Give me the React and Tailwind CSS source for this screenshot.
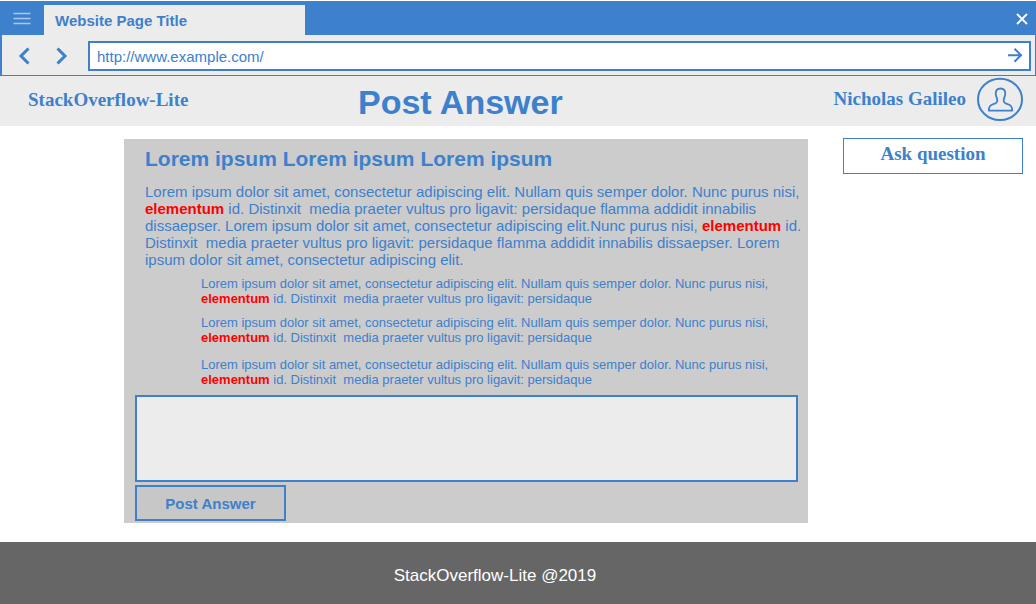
const comments = [
  { id: 1, spacing: "mt-2" },
  { id: 2, spacing: "mt-[9px]" },
  { id: 3, spacing: "mt-3" },
];

function Keyword() {
  return <strong className="font-bold text-[#ff0000]">elementum</strong>;
}

function BrowserBar() {
  return (
    <div className="pt-px">
      <div className="flex h-[34px] items-end bg-[#3d80cc]">
        <button type="button" aria-label="Menu" className="flex h-full w-11 items-center justify-center pt-0.5">
          <svg width="18" height="14" viewBox="0 0 18 14" stroke="#a9c8ea" strokeWidth="1.6" aria-hidden="true">
            <path d="M0.5 1.5H17.5M0.5 6.5H17.5M0.5 11.5H17.5" />
          </svg>
        </button>
        <div className="flex h-[30px] w-[261px] items-center bg-[#ececec] px-[11px] pt-0.5 text-[15px] font-bold">
          Website Page Title
        </div>
        <button type="button" aria-label="Close" className="ml-auto flex h-full w-7 items-center justify-center pt-px">
          <svg width="12" height="12" viewBox="0 0 12 12" stroke="#ffffff" strokeWidth="1.8" aria-hidden="true">
            <path d="M1 1L11 11M11 1L1 11" />
          </svg>
        </button>
      </div>
      <div className="flex h-[41px] items-center border-r border-b border-l-2 border-[#3d80cc] bg-[#ececec] pt-0.5 pr-1">
        <button type="button" aria-label="Back" className="ml-4 flex w-3 justify-center">
          <svg width="12" height="18" viewBox="0 0 12 18" fill="none" stroke="#3d80cc" strokeWidth="3" aria-hidden="true">
            <path d="M10.5 1.5L3 9L10.5 16.5" />
          </svg>
        </button>
        <button type="button" aria-label="Forward" className="ml-[26px] flex w-3 justify-center">
          <svg width="12" height="18" viewBox="0 0 12 18" fill="none" stroke="#3d80cc" strokeWidth="3" aria-hidden="true">
            <path d="M1.5 1.5L9 9L1.5 16.5" />
          </svg>
        </button>
        <div className="ml-5 flex h-[30px] flex-1 items-center border-2 border-[#3d80cc] bg-white pr-1.5 pl-[7px]">
          <input
            type="text"
            aria-label="Address"
            defaultValue="http://www.example.com/"
            className="min-w-0 flex-1 bg-transparent pt-0.5 text-[15px] outline-none"
          />
          <button type="button" aria-label="Go">
            <svg width="16" height="16" viewBox="0 0 16 16" fill="none" stroke="#3d80cc" strokeWidth="2" aria-hidden="true">
              <path d="M1 7.2H14M7.5 0.7L14 7.2L7.5 13.7" />
            </svg>
          </button>
        </div>
      </div>
    </div>
  );
}

function Header() {
  return (
    <header className="flex h-[50px] items-center bg-[#ececec] pr-[13px] pb-1 pl-7">
      <a href="#home" className="w-[330px] pt-0.5 font-['Liberation_Serif',serif] text-[19px] font-bold">
        StackOverflow-Lite
      </a>
      <h1 className="pt-1.5 text-[34px] leading-10 font-bold">Post Answer</h1>
      <a href="#profile" className="ml-auto flex items-center gap-[11px] font-['Liberation_Serif',serif] text-[19px] font-bold">
        <span>Nicholas Galileo</span>
        <svg width="46" height="44" viewBox="0 0 46 44" fill="none" stroke="#3d80cc" aria-hidden="true">
          <ellipse cx="23" cy="22.4" rx="22" ry="20.6" strokeWidth="2" />
          <path
            d="M23.5 11.5C20.4 11.5 18.7 13.5 18.7 16.6C18.7 19.2 20.3 21 20.3 23.4C20.3 25.6 19.2 26.4 16.4 27.1C13 28 11.8 29.4 11.8 33.6H35.2C35.2 29.4 34 28 30.6 27.1C27.8 26.4 26.7 25.6 26.7 23.4C26.7 21 28.3 19.2 28.3 16.6C28.3 13.5 26.6 11.5 23.5 11.5Z"
            strokeWidth="1.8"
            strokeLinejoin="round"
          />
        </svg>
      </a>
    </header>
  );
}

export default function App() {
  return (
    <div className="flex min-h-screen flex-col bg-white font-['Liberation_Sans',Arial,sans-serif] text-[#3d80cc]">
      <BrowserBar />
      <Header />
      <div className="flex flex-1 items-start gap-[35px] pt-3 pr-[13px] pb-[19px] pl-[124px]">
        <main className="mt-px min-w-0 flex-1 bg-[#cccccc] pt-[7px] pb-0.5">
          <article className="pr-0.5 pl-[21px]">
            <h2 className="text-[21px] leading-[26px] font-bold">Lorem ipsum Lorem ipsum Lorem ipsum</h2>
            <p className="mt-[11px] text-[15px] leading-[17px] whitespace-pre-wrap">
              Lorem ipsum dolor sit amet, consectetur adipiscing elit. Nullam quis semper dolor. Nunc purus nisi,{" "}
              <Keyword />
              {" id. Distinxit  media praeter vultus pro ligavit: persidaque flamma addidit innabilis dissaepser. Lorem ipsum dolor sit amet, consectetur adipiscing elit.Nunc purus nisi, "}
              <Keyword />
              {" id. Distinxit  media praeter vultus pro ligavit: persidaque flamma addidit innabilis dissaepser. Lorem ipsum dolor sit amet, consectetur adipiscing elit."}
            </p>
            <ul className="pr-2 pl-14 text-[13px] leading-[15px]">
              {comments.map((comment) => (
                <li key={comment.id} className={`${comment.spacing} whitespace-pre-wrap`}>
                  Lorem ipsum dolor sit amet, consectetur adipiscing elit. Nullam quis semper dolor. Nunc purus nisi,{" "}
                  <Keyword />
                  {" id. Distinxit  media praeter vultus pro ligavit: persidaque"}
                </li>
              ))}
            </ul>
          </article>
          <form className="mt-2 pr-2.5 pl-[11px]" onSubmit={(event) => event.preventDefault()}>
            <textarea
              aria-label="Your answer"
              className="block h-[87px] w-full resize-none border-2 border-[#3d80cc] bg-[#ececec] p-2 text-[15px] outline-none"
            />
            <button
              type="submit"
              className="mt-[3px] block h-9 w-[151px] border-2 border-[#3d80cc] bg-[#c7c7c7] pt-0.5 text-[15px] font-bold"
            >
              Post Answer
            </button>
          </form>
        </main>
        <aside className="w-[180px]">
          <button
            type="button"
            className="h-9 w-full border border-[#3d80cc] bg-white pb-1 font-['Liberation_Serif',serif] text-[19px] font-bold"
          >
            Ask question
          </button>
        </aside>
      </div>
      <footer className="flex h-[62px] items-center justify-center bg-[#666666] pt-1.5 pr-[46px] text-[17px] text-white">
        StackOverflow-Lite @2019
      </footer>
    </div>
  );
}
